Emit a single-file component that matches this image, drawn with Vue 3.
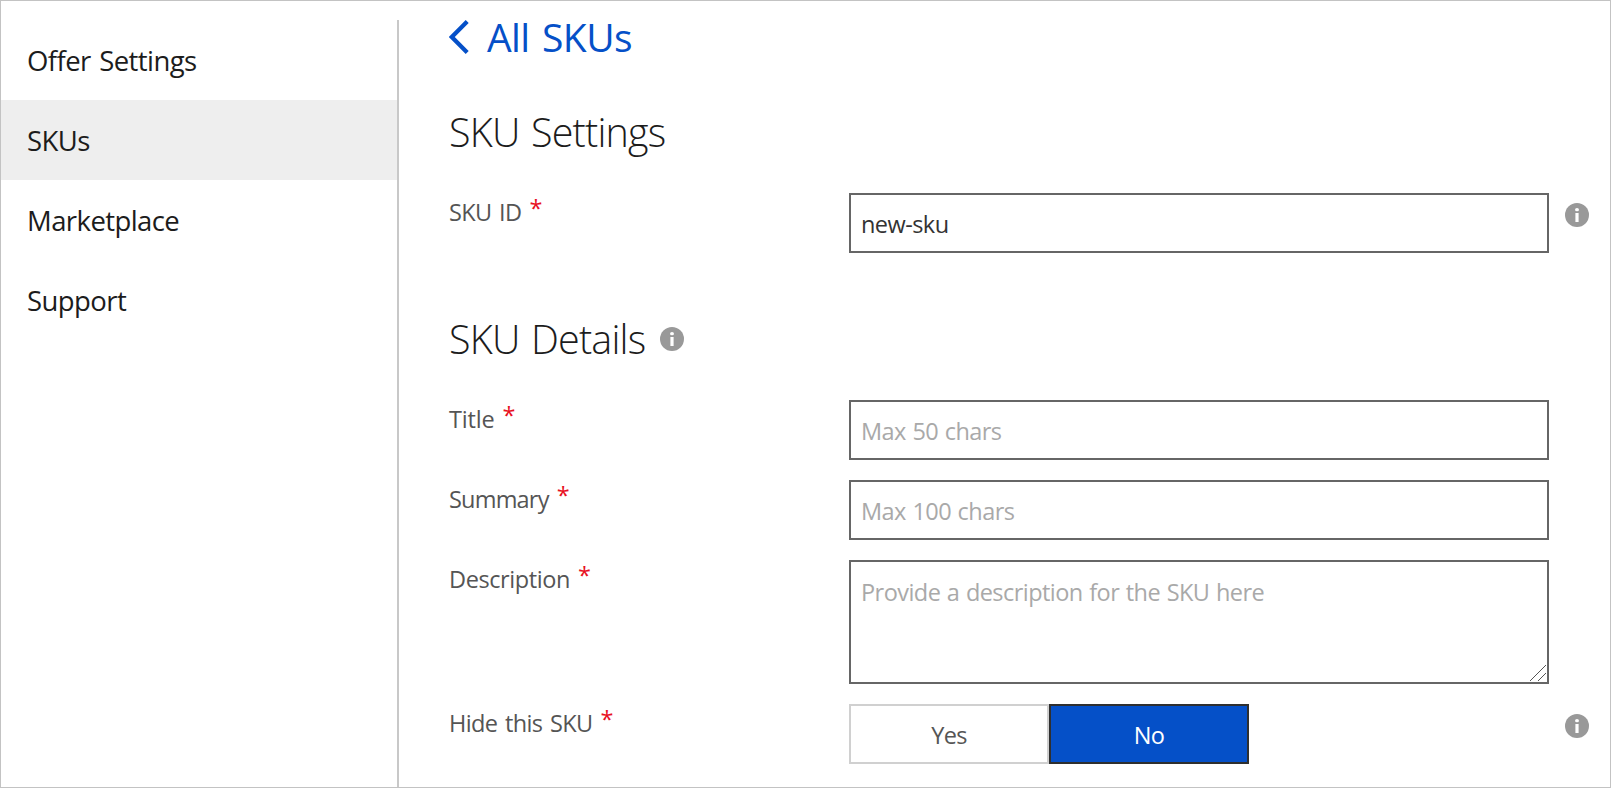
<script setup>
import { ref } from 'vue'

const navItems = ['Offer Settings', 'SKUs', 'Marketplace', 'Support']
const active = ref('SKUs')
const skuId = ref('new-sku')
const title = ref('')
const summary = ref('')
const description = ref('')
const hidden = ref(false)
</script>

<template>
  <div class="page">
    <nav class="sidebar">
      <a
        v-for="item in navItems"
        :key="item"
        class="nav-item"
        :class="{ active: item === active }"
        @click="active = item"
      >{{ item }}</a>
    </nav>

    <main class="content">
      <a class="back">
        <svg class="chevron" width="20" height="34" viewBox="0 0 20 34">
          <path d="M18.2 1.6 L2.8 17 L18.2 32.4" fill="none" stroke="#0550c8" stroke-width="4.2" />
        </svg>
        <span class="back-text">All SKUs</span>
      </a>

      <h2 class="heading first">SKU Settings</h2>
      <div class="row">
        <label class="label"><span>SKU ID</span><span class="req">*</span></label>
        <input v-model="skuId" class="field" type="text" />
        <svg class="info" width="24" height="24" viewBox="0 0 24 24">
          <circle cx="12" cy="12" r="12" fill="#999" />
          <ellipse cx="12" cy="6.7" rx="2" ry="1.6" fill="#fff" />
          <rect x="10.4" y="10" width="3.2" height="9" fill="#fff" />
        </svg>
      </div>

      <h2 class="heading second">
        <span>SKU Details</span>
        <svg width="24" height="24" viewBox="0 0 24 24">
          <circle cx="12" cy="12" r="12" fill="#999" />
          <ellipse cx="12" cy="6.7" rx="2" ry="1.6" fill="#fff" />
          <rect x="10.4" y="10" width="3.2" height="9" fill="#fff" />
        </svg>
      </h2>
      <div class="row">
        <label class="label"><span class="l-title">Title</span><span class="req">*</span></label>
        <input v-model="title" class="field" type="text" placeholder="Max 50 chars" />
      </div>
      <div class="row">
        <label class="label"><span class="l-summary">Summary</span><span class="req">*</span></label>
        <input v-model="summary" class="field" type="text" placeholder="Max 100 chars" />
      </div>
      <div class="row">
        <label class="label"><span class="l-desc">Description</span><span class="req">*</span></label>
        <div class="area-wrap">
          <textarea v-model="description" class="field area" placeholder="Provide a description for the SKU here"></textarea>
          <svg class="grip" width="16" height="16" viewBox="0 0 16 16">
            <path d="M0 16 L16 0 M8 16 L16 8" fill="none" stroke="#555" stroke-width="1" />
          </svg>
        </div>
      </div>
      <div class="row">
        <label class="label"><span class="l-hide">Hide this SKU</span><span class="req">*</span></label>
        <div class="toggle">
          <button class="option" :class="{ selected: hidden }" @click="hidden = true">Yes</button>
          <button class="option" :class="{ selected: !hidden }" @click="hidden = false">No</button>
        </div>
        <svg class="info" width="24" height="24" viewBox="0 0 24 24">
          <circle cx="12" cy="12" r="12" fill="#999" />
          <ellipse cx="12" cy="6.7" rx="2" ry="1.6" fill="#fff" />
          <rect x="10.4" y="10" width="3.2" height="9" fill="#fff" />
        </svg>
      </div>
    </main>
  </div>
</template>

<style>
body {
  margin: 0;
  background: #fff;
}
</style>

<style scoped>
.page {
  box-sizing: border-box;
  width: 1611px;
  height: 788px;
  border: 1px solid #c3c3c3;
  display: flex;
  overflow: hidden;
  background: #fff;
  color: #1c1c1c;
  font-family: "Open Sans", "Noto Sans", sans-serif;
}
.sidebar {
  box-sizing: border-box;
  width: 398px;
  margin-top: 19px;
  border-right: 2px solid #c8c8c8;
  flex: none;
}
.nav-item {
  display: block;
  box-sizing: border-box;
  height: 80px;
  padding-top: 1px;
  line-height: 80px;
  padding-left: 26px;
  font-size: 27.5px;
  letter-spacing: -0.58px;
  word-spacing: 2px;
  cursor: pointer;
}
.nav-item.active {
  background: #eee;
}
.content {
  padding-left: 50px;
  flex: 1;
}
.back {
  display: flex;
  align-items: center;
  height: 40px;
  margin-top: 16px;
  color: #0550c8;
  font-size: 39px;
  cursor: pointer;
}
.back-text {
  margin-left: 18px;
  margin-top: -2px;
  letter-spacing: -0.6px;
  word-spacing: 3px;
}
.heading {
  display: flex;
  align-items: center;
  margin: 0;
  height: 60px;
  font-size: 39.5px;
  font-weight: 350;
  letter-spacing: -0.8px;
  word-spacing: 2px;
}
.heading.first {
  margin-top: 45px;
  margin-bottom: 31px;
}
.heading.second {
  margin-top: 56px;
  margin-bottom: 31px;
}
.heading svg {
  margin-left: 15px;
}
.row {
  display: flex;
  align-items: flex-start;
  margin-bottom: 20px;
}
.label {
  display: flex;
  width: 400px;
  height: 38px;
  line-height: 38px;
  font-size: 23.5px;
  letter-spacing: -0.6px;
  word-spacing: 2px;
  color: #555;
}
.l-title {
  letter-spacing: -0.2px;
}
.l-summary {
  letter-spacing: -0.8px;
}
.l-desc {
  letter-spacing: -0.4px;
}
.req {
  color: #e81123;
  margin-left: 8px;
  margin-top: -4px;
}
.field {
  box-sizing: border-box;
  display: block;
  width: 700px;
  height: 60px;
  margin: 0;
  padding: 2px 10px 0;
  border: 2px solid #666;
  border-radius: 0;
  outline: none;
  background: #fff;
  color: #333;
  font-family: inherit;
  font-size: 23.5px;
  letter-spacing: -0.55px;
  word-spacing: 1px;
}
.field::placeholder {
  color: #a9a9a9;
  opacity: 1;
}
.area-wrap {
  position: relative;
}
.area {
  height: 124px;
  padding-top: 14px;
  line-height: 32px;
  resize: none;
  overflow: hidden;
}
.grip {
  position: absolute;
  right: 3px;
  bottom: 3px;
}
.info {
  margin: 10px 0 0 16px;
}
.toggle {
  display: flex;
  width: 700px;
}
.option {
  width: 200px;
  height: 60px;
  padding: 2px 0 0;
  border: 2px solid #d0d0d0;
  background: #fff;
  color: #555;
  font-family: inherit;
  font-size: 23.5px;
  letter-spacing: -0.6px;
}
.option.selected {
  border-color: #2f2f2f;
  background: #0550c8;
  color: #fff;
  font-weight: 500;
}
</style>
